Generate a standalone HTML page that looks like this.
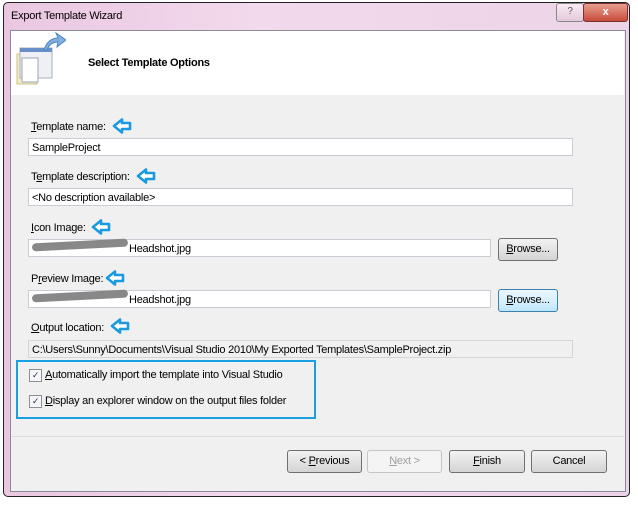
<!DOCTYPE html>
<html><head><style>
body{margin:0;width:638px;height:505px;background:#fff;position:relative;overflow:hidden;font-family:"Liberation Sans",sans-serif;font-size:11px;letter-spacing:-0.25px;color:#000}
.a{position:absolute}
.win{left:3px;top:2px;width:625px;height:493px;border:1px solid #222;background:linear-gradient(90deg,#e9c7e0,#f3d9ec 40%,#ecd4e6);border-radius:5px}
.client{left:10px;top:30px;width:614px;height:460px;background:#f0f0f0;border:1px solid #8a8a9a}
.hdr{left:11px;top:31px;width:613px;height:64px;background:#fff}
.inp{background:#fff;border:1px solid #c8cdd4;height:18px;line-height:18px;padding-left:3px;box-sizing:border-box}
.btn{border:1px solid #707070;border-radius:3px;background:linear-gradient(#f3f3f3,#e3e3e3 50%,#d4d4d4);text-align:center;line-height:21px;height:23px;box-sizing:border-box}
u{text-decoration:underline}
.arr{width:20px;height:16px}
.cb{width:11px;height:11px;border:1px solid #8f8f8f;background:#f4f6f9;font-size:9px;line-height:11px;text-align:center;color:#334}
</style></head><body>
<div class="a win"></div>
<div class="a" style="left:11px;top:10px;font-size:11px">Export Template Wizard</div>
<div class="a" style="left:556px;top:3px;width:26px;height:17px;border:1px solid #888;border-radius:3px;background:linear-gradient(#fbeaf5,#e3c9da);text-align:center;font-size:10px;line-height:16px;color:#555">?</div>
<div class="a" style="left:583px;top:3px;width:43px;height:17px;border:1px solid #7a3030;border-radius:3px;background:linear-gradient(#e8a090,#c74a3a);text-align:center;color:#fff;font-weight:bold;line-height:16px">x</div>
<div class="a client"></div>
<div class="a hdr"></div>
<svg class="a" style="left:14px;top:32px" width="52" height="60"><rect x="3" y="22" width="20" height="30" fill="#f5edc0" stroke="#c9c090"/><rect x="6" y="16" width="32" height="30" fill="#eef0f4" stroke="#a9b0bc"/><rect x="6" y="16" width="32" height="4" fill="#6a8fc8"/><rect x="8" y="26" width="16" height="24" fill="#fff" stroke="#9aa6b8"/><path d="M30 18 Q34 6 44 6 L42 1 L52 8 L43 15 L44 10 Q36 10 33 18Z" fill="#7fb0e0" stroke="#4f86c0"/></svg>
<div class="a" style="left:88px;top:57px;font-weight:bold;font-size:11px">Select Template Options</div>

<svg width="0" height="0" style="position:absolute"><defs><symbol id="ar" viewBox="0 0 20 16"><path d="M2 8 L10 1.5 L10 5 L18 5 L18 11 L10 11 L10 14.5Z" fill="#fff" stroke="#1a9ae0" stroke-width="2.6" stroke-linejoin="round"/></symbol></defs></svg>

<div class="a" style="left:31px;top:121px"><u>T</u>emplate name:</div>
<svg class="a arr" style="left:112px;top:118px"><use href="#ar"/></svg>
<div class="a inp" style="left:28px;top:138px;width:545px">SampleProject</div>

<div class="a" style="left:31px;top:171px">T<u>e</u>mplate description:</div>
<svg class="a arr" style="left:136px;top:168px"><use href="#ar"/></svg>
<div class="a inp" style="left:28px;top:188px;width:545px">&lt;No description available&gt;</div>

<div class="a" style="left:31px;top:222px"><u>I</u>con Image:</div>
<svg class="a arr" style="left:91px;top:219px"><use href="#ar"/></svg>
<div class="a inp" style="left:28px;top:239px;width:463px;padding-left:100px">Headshot.jpg</div>
<div class="a" style="left:32px;top:241px;width:96px;height:8px;background:#888;border-radius:4px;transform:rotate(-3deg)"></div>
<div class="a btn" style="left:498px;top:238px;width:60px"><u>B</u>rowse...</div>

<div class="a" style="left:31px;top:273px">P<u>r</u>eview Image:</div>
<svg class="a arr" style="left:105px;top:270px"><use href="#ar"/></svg>
<div class="a inp" style="left:28px;top:290px;width:463px;padding-left:100px">Headshot.jpg</div>
<div class="a" style="left:32px;top:292px;width:96px;height:8px;background:#888;border-radius:4px;transform:rotate(-3deg)"></div>
<div class="a btn" style="left:498px;top:289px;width:60px;border-color:#3c7fb1;background:linear-gradient(#eaf6fd,#d9f0fc 50%,#bee6fd)"><u>B</u>rowse...</div>

<div class="a" style="left:31px;top:322px"><u>O</u>utput location:</div>
<svg class="a arr" style="left:110px;top:318px"><use href="#ar"/></svg>
<div class="a inp" style="left:28px;top:340px;width:545px;background:#f0f0f0;border-color:#d5d5d5">C:\Users\Sunny\Documents\Visual Studio 2010\My Exported Templates\SampleProject.zip</div>

<div class="a" style="left:16px;top:360px;width:300px;height:59px;border:2px solid #1aa0e0;box-sizing:border-box"></div>
<div class="a cb" style="left:29px;top:369px">✓</div>
<div class="a" style="left:45px;top:369px"><u>A</u>utomatically import the template into Visual Studio</div>
<div class="a cb" style="left:29px;top:395px">✓</div>
<div class="a" style="left:45px;top:395px"><u>D</u>isplay an explorer window on the output files folder</div>

<div class="a" style="left:11px;top:436px;width:613px;height:1px;background:#dcdcdc"></div>
<div class="a btn" style="left:287px;top:450px;width:75px">&lt; <u>P</u>revious</div>
<div class="a btn" style="left:367px;top:450px;width:75px;border-color:#c5c5c5;background:#f4f4f4;color:#a0a0a0"><u>N</u>ext &gt;</div>
<div class="a btn" style="left:449px;top:450px;width:76px"><u>F</u>inish</div>
<div class="a btn" style="left:531px;top:450px;width:76px">Cancel</div>
</body></html>
